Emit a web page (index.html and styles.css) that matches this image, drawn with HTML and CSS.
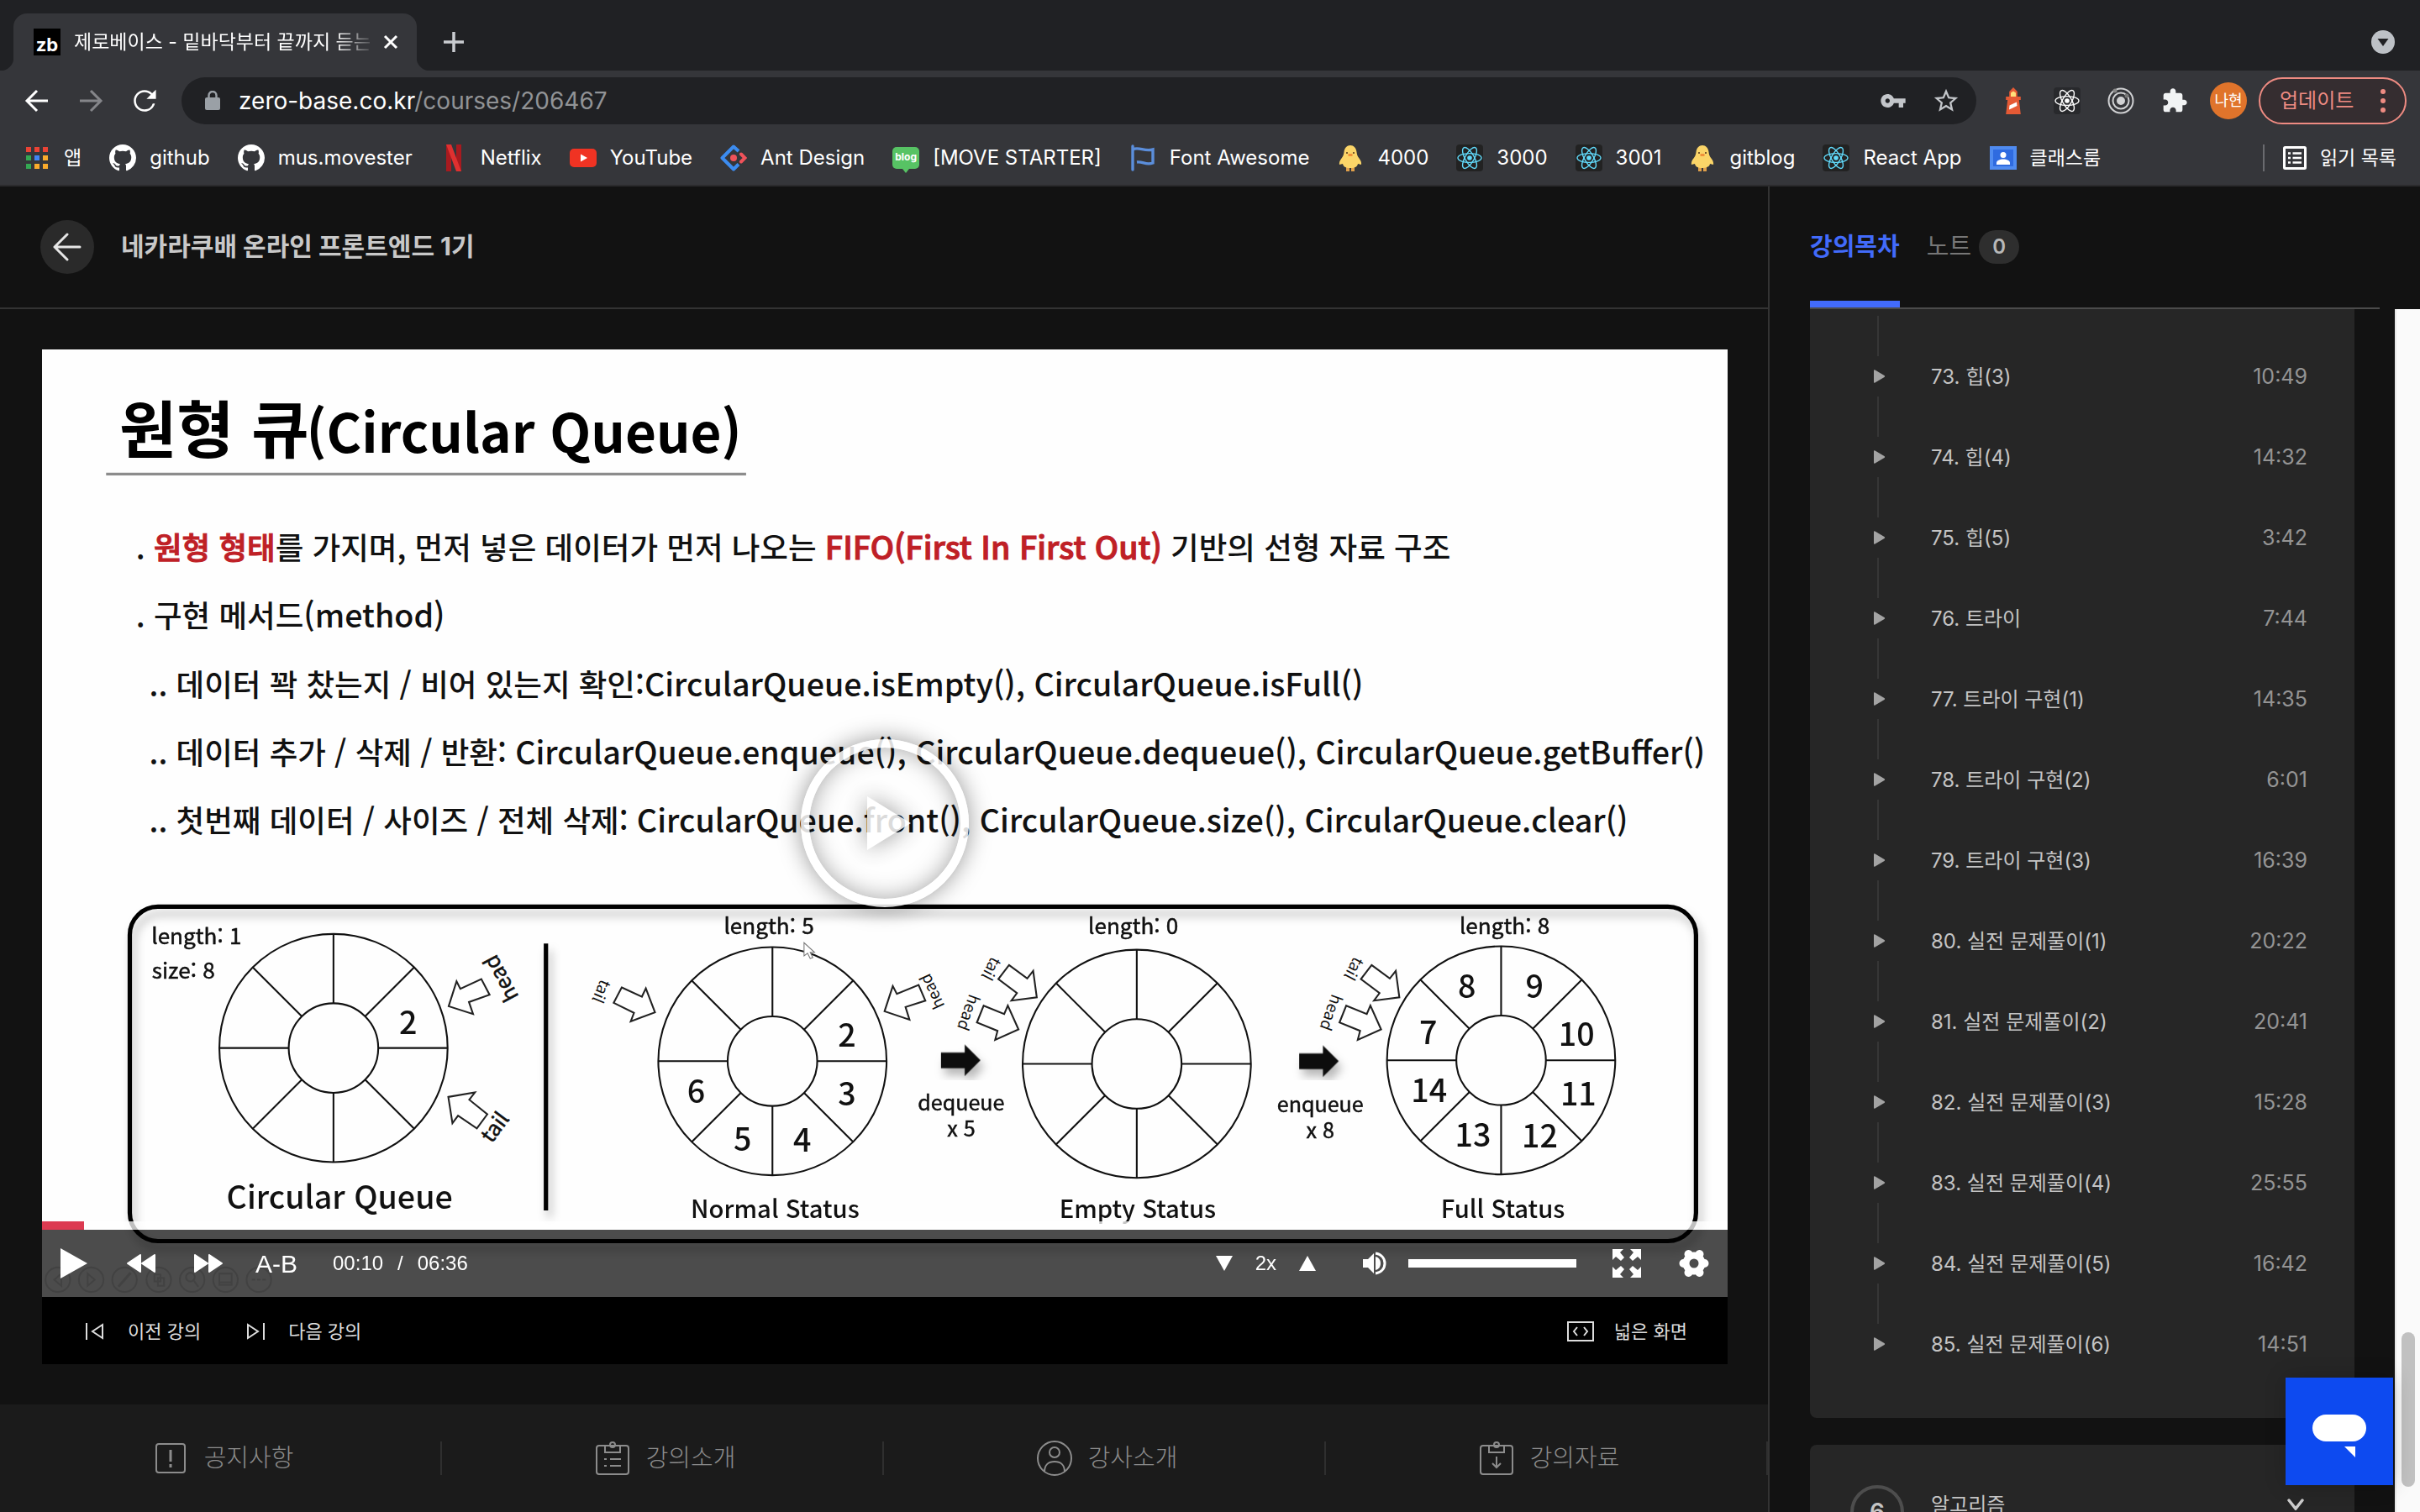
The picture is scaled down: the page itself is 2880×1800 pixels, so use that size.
FILE: index.html
```html
<!DOCTYPE html>
<html lang="ko">
<head>
<meta charset="utf-8">
<title>제로베이스 - 밑바닥부터 끝까지 듣는</title>
<link rel="stylesheet" href="styles.css">
</head>
<body>
<svg class="defs" aria-hidden="true">
  <symbol id="github" viewBox="0 0 16 16"><path fill="#fff" d="M8 0C3.58 0 0 3.58 0 8c0 3.54 2.29 6.53 5.47 7.59.4.07.55-.17.55-.38 0-.19-.01-.82-.01-1.49-2.01.37-2.53-.49-2.69-.94-.09-.23-.48-.94-.82-1.13-.28-.15-.68-.52-.01-.53.63-.01 1.08.58 1.23.82.72 1.21 1.87.87 2.33.66.07-.52.28-.87.51-1.07-1.78-.2-3.64-.89-3.64-3.95 0-.87.31-1.59.82-2.15-.08-.2-.36-1.02.08-2.12 0 0 .67-.21 2.2.82.64-.18 1.32-.27 2-.27s1.36.09 2 .27c1.53-1.04 2.2-.82 2.2-.82.44 1.1.16 1.92.08 2.12.51.56.82 1.27.82 2.15 0 3.07-1.87 3.75-3.65 3.95.29.25.54.73.54 1.48 0 1.07-.01 1.93-.01 2.2 0 .21.15.46.55.38A8.01 8.01 0 0 0 16 8c0-4.42-3.58-8-8-8z"/></symbol>
  <symbol id="atom" viewBox="0 0 32 32"><g fill="none" stroke="currentColor" stroke-width="1.4"><ellipse cx="16" cy="16" rx="14" ry="5.4"/><ellipse cx="16" cy="16" rx="14" ry="5.4" transform="rotate(60 16 16)"/><ellipse cx="16" cy="16" rx="14" ry="5.4" transform="rotate(120 16 16)"/></g><circle cx="16" cy="16" r="2.8" fill="currentColor"/></symbol>
  <symbol id="chick" viewBox="0 0 32 32"><path fill="#e0a04a" d="M11 26h4v6h-4zM17 26h4v6h-4z"/><path fill="#fbd568" d="M16 1c4 0 7 3 7.500 8 .3 3 1 5 3 7.500 2 2.500 3 5 2.500 7.500l-4-1c-.5 3-3 5-9 5s-8.500-2-9-5l-4 1c-.5-2.500.5-5 2.500-7.500s2.700-4.500 3-7.500C9 4 12 1 16 1z"/><path fill="#7a5a2a" d="M11 9h2v2h-2zM19 9h2v2h-2z"/><path fill="#f0913a" d="M13.500 11h5v3h-5z"/></symbol>
  <symbol id="row-play" viewBox="0 0 14 16"><path fill="#a3a3a3" d="M0 1.200Q0-.5 1.500.5l11 6.500q1.300 1 0 2l-11 6.500Q0 16.500 0 14.800z"/></symbol>
</svg>

<div class="shell">
  <header class="browser">
    <div class="tab-strip">
      <div class="tab">
        <span class="favicon">zb</span>
        <span class="tab-title">제로베이스 - 밑바닥부터 끝까지 듣는</span>
        <button class="plain" aria-label="탭 닫기"><svg width="18" height="18" viewBox="0 0 18 18"><path d="M2 2l14 14M16 2L2 16" stroke="#fff" stroke-width="3"/></svg></button>
      </div>
      <button class="plain new-tab" aria-label="새 탭"><svg width="26" height="26" viewBox="0 0 26 26"><path d="M13 1v24M1 13h24" stroke="#c9ccd0" stroke-width="3.500"/></svg></button>
      <button class="plain tab-search" aria-label="탭 검색"><svg width="28" height="28" viewBox="0 0 28 28"><circle cx="14" cy="14" r="14" fill="#bdc1c6"/><path d="M7.500 10h13L14 19z" fill="#202124"/></svg></button>
    </div>

    <div class="toolbar">
      <button class="plain" aria-label="뒤로"><svg width="32" height="32" viewBox="0 0 32 32" fill="none" stroke="#fff" stroke-width="3"><path d="M29 16H5M16 4L4 16l12 12"/></svg></button>
      <button class="plain" aria-label="앞으로"><svg width="32" height="32" viewBox="0 0 32 32" fill="none" stroke="#85868a" stroke-width="3"><path d="M3 16h24M16 4l12 12-12 12"/></svg></button>
      <button class="plain" aria-label="새로고침"><svg width="32" height="32" viewBox="2 2 20 20"><path fill="#fff" d="M17.650 6.350A7.958 7.958 0 0 0 12 4c-4.420 0-7.990 3.580-7.990 8s3.570 8 7.990 8c3.730 0 6.840-2.550 7.730-6h-1.600A6.500 6.500 0 0 1 12 18.400c-3.500 0-6.400-2.900-6.400-6.400s2.900-6.400 6.400-6.400c1.800 0 3.400.7 4.600 1.900L13.500 10.600H20.500V3.700z"/></svg></button>
      <div class="omnibox">
        <svg width="18" height="24" viewBox="0 0 18 24"><path d="M4.500 9V5.500a4.500 4.500 0 0 1 9 0V9" fill="none" stroke="#9aa0a6" stroke-width="2.400"/><rect x="0" y="8" width="18" height="15" rx="2" fill="#9aa0a6"/></svg>
        <span class="url">zero-base.co.kr<span class="url-path">/courses/206467</span></span>
        <button class="plain" aria-label="비밀번호"><svg width="32" height="32" viewBox="0 0 24 24"><path fill="#c3c6ca" d="M12.650 10C11.830 7.670 9.610 6 7 6c-3.310 0-6 2.690-6 6s2.690 6 6 6c2.610 0 4.830-1.670 5.650-4H17v4h4v-4h2v-4H12.650zM7 14c-1.100 0-2-.9-2-2s.9-2 2-2 2 .9 2 2-.9 2-2 2z"/></svg></button>
        <button class="plain" aria-label="북마크"><svg width="34" height="34" viewBox="0 0 24 24"><path fill="#c3c6ca" d="M22 9.240l-7.190-.62L12 2 9.190 8.630 2 9.240l5.460 4.730L5.820 21 12 17.270 18.180 21l-1.630-7.030L22 9.240zM12 15.400l-3.760 2.270 1-4.280-3.320-2.880 4.380-.38L12 6.100l1.710 4.040 4.380.38-3.320 2.880 1 4.280L12 15.400z"/></svg></button>
      </div>
      <div class="extensions">
        <button class="plain" aria-label="Lighthouse"><svg width="32" height="32" viewBox="0 0 32 32"><path fill="#e55a35" d="M16 0l6 5v6h5v4h-2.500L27 32H5l2.500-17H5v-4h5V5z" transform="translate(3.200 0) scale(.8 1)"/><path fill="#ffe07a" d="M13 6.500l3-2 3 2V11h-6z"/><path fill="#fff" d="M11.500 21.500l8.500-4 .5 4.500-9.500 4.500z"/></svg></button>
        <button class="plain atom-ext" aria-label="React Developer Tools"><svg width="32" height="32"><use href="#atom"/></svg></button>
        <button class="plain" aria-label="Target"><svg width="32" height="32" viewBox="0 0 32 32" fill="none" stroke="#d0d1d3" stroke-width="2"><circle cx="16" cy="16" r="14.500"/><circle cx="16" cy="16" r="9.500"/><circle cx="16" cy="16" r="4" fill="#d0d1d3"/><circle cx="9" cy="4" r="2.500" fill="#888" stroke="none"/><circle cx="23" cy="10" r="2.500" fill="#777" stroke="none"/></svg></button>
        <button class="plain" aria-label="확장 프로그램"><svg width="32" height="32" viewBox="0 0 24 24"><path fill="#f1f3f4" d="M20.500 11H19V7c0-1.100-.9-2-2-2h-4V3.500C13 2.120 11.880 1 10.500 1S8 2.120 8 3.500V5H4c-1.100 0-1.990.9-1.990 2v3.800H3.500c1.490 0 2.700 1.210 2.700 2.700s-1.210 2.700-2.700 2.700H2V20c0 1.100.9 2 2 2h3.800v-1.500c0-1.490 1.210-2.700 2.700-2.700 1.490 0 2.700 1.210 2.700 2.700V22H17c1.100 0 2-.9 2-2v-4h1.500c1.380 0 2.500-1.120 2.500-2.500S21.880 11 20.500 11z"/></svg></button>
      </div>
      <button class="plain avatar">나현</button>
      <button class="update">업데이트<svg width="6" height="28" viewBox="0 0 6 28" fill="#ee8b82"><circle cx="3" cy="3" r="3"/><circle cx="3" cy="14" r="3"/><circle cx="3" cy="25" r="3"/></svg></button>
    </div>

    <nav class="bookmarks">
      <a href="#" class="ko"><svg width="32" height="32" viewBox="0 0 32 32"><path fill="#ea4335" d="M3 3h6v6H3zM13 3h6v6h-6zM23 3h6v6h-6z"/><path fill="#34a853" d="M3 13h6v6H3zM3 23h6v6H3z"/><path fill="#4285f4" d="M13 13h6v6h-6z"/><path fill="#fbab2c" d="M23 13h6v6h-6zM13 23h6v6h-6zM23 23h6v6h-6z"/></svg>앱</a>
      <a href="#"><svg width="32" height="32"><use href="#github"/></svg>github</a>
      <a href="#"><svg width="32" height="32"><use href="#github"/></svg>mus.movester</a>
      <a href="#"><svg width="32" height="32" viewBox="0 0 32 32"><path fill="#a81a1f" d="M7 0h6v32H7zM19 0h6v32h-6z"/><path fill="#e03030" d="M7 0h6l12 32h-6z"/></svg>Netflix</a>
      <a href="#"><svg width="32" height="32" viewBox="0 0 32 32"><rect y="5" width="32" height="22" rx="5" fill="#f03323"/><path fill="#fff" d="M13 11.500l8 4.500-8 4.500z"/></svg>YouTube</a>
      <a href="#"><svg width="32" height="32" viewBox="0 0 32 32" fill="none" stroke-width="4"><path stroke="#3c8cf0" stroke-linejoin="round" d="M22 8l-6-5.500L2.500 16 16 29.500l6-6"/><path stroke="#f0525a" stroke-linecap="round" d="M25 11.500l4.500 4.500-4.500 4.500"/><circle cx="16" cy="16" r="4" fill="#f0525a"/></svg>Ant Design</a>
      <a href="#"><span class="blog-icon">blog</span>[MOVE STARTER]</a>
      <a href="#"><svg width="32" height="32" viewBox="0 0 32 32" fill="none" stroke="#5b8edb" stroke-width="3.400"><path d="M4 2v28" stroke-linecap="round"/><path d="M4 6c7-4 14 3 24 0v16c-8 3-12-2-19-1"/></svg>Font Awesome</a>
      <a href="#"><svg width="32" height="32"><use href="#chick"/></svg>4000</a>
      <a href="#"><svg class="react" width="32" height="32"><use href="#atom"/></svg>3000</a>
      <a href="#"><svg class="react" width="32" height="32"><use href="#atom"/></svg>3001</a>
      <a href="#"><svg width="32" height="32"><use href="#chick"/></svg>gitblog</a>
      <a href="#"><svg class="react" width="32" height="32"><use href="#atom"/></svg>React App</a>
      <a href="#" class="ko"><svg width="32" height="32" viewBox="0 0 32 32"><path fill="#4f8bf0" d="M0 2h32v28H0z"/><path fill="#2f6be0" d="M4 6h24v20H4z"/><circle cx="16" cy="12.500" r="3.500" fill="#fff"/><path fill="#fff" d="M8 24v-2c0-3 4-4.500 8-4.500s8 1.500 8 4.500v2z"/></svg>클래스룸</a>
      <a href="#" class="ko reading-list"><svg width="28" height="28" viewBox="0 0 28 28"><rect x="1.500" y="1.500" width="25" height="25" rx="1" fill="none" stroke="#fff" stroke-width="3"/><path stroke="#fff" stroke-width="2.600" d="M6 8.500h3M11.500 8.500H22M6 14h3M11.500 14H22M6 19.500h3M11.500 19.500H22"/></svg>읽기 목록</a>
    </nav>
  </header>

  <div class="page">
    <main class="lesson">
      <div class="lesson-head">
        <button class="plain back" aria-label="뒤로"><svg width="34" height="34" viewBox="0 0 34 34" fill="none" stroke="#e6e6e6" stroke-width="3" stroke-linecap="round" stroke-linejoin="round"><path d="M32 17H2M17 2L2 17l15 15"/></svg></button>
        <h1>네카라쿠배 온라인 프론트엔드 1기</h1>
      </div>

      <section class="player">
        <div class="video">
          <svg class="slide" viewBox="0 0 1920 1080">
            <defs>
              <filter id="soft" x="-10%" y="-10%" width="120%" height="120%"><feDropShadow dx="4" dy="8" stdDeviation="5" flood-opacity=".28"/></filter>
              <g id="wheel" fill="none" stroke="#111" stroke-width="2">
                <circle r="130"/><circle r="51"/>
                <path d="M0-51V-130M0 51V130M-51 0H-130M51 0H130M36-36L92-92M-36 36L-92 92M36 36L92 92M-36-36L-92-92"/>
              </g>
              <g id="both-pointers">
                <path class="pointer" d="M1101.500 701.500L1122.200 716.800 1129 708.200 1133.100 738.200 1104.200 742 1110.500 733.400 1089.300 717.400Z"/>
                <path class="pointer" d="M1072.600 747.700L1096 757.300 1100.100 747.700 1112.300 774.800 1085.700 786.600 1088.400 776.400 1064.900 766.900Z"/>
                <text class="t18" transform="translate(1080 705) rotate(118)" y="5">tail</text>
                <text class="t18" transform="translate(1054 755) rotate(110)" y="5">head</text>
              </g>
              <path id="step" d="M1024 801h27v-9l18 18-18 18v-9h-27z"/>
            </defs>
            <rect width="1920" height="1080" fill="#fefefe"/>
            <text class="title-ko" x="88" y="118">원형 큐</text>
            <text class="title-en" x="301" y="118">(Circular Queue)</text>
            <path d="M73 142H802" stroke="#8c8c8c" stroke-width="3"/>
            <g class="body">
              <text x="107" y="239"><tspan class="ko">. <tspan class="key">원형 형태</tspan>를 가지며, 먼저 넣은 데이터가 먼저 나오는 </tspan><tspan class="key">FIFO(First In First Out)</tspan><tspan class="ko"> 기반의 선형 자료 구조</tspan></text>
              <text x="107" y="317"><tspan class="ko">. 구현 메서드</tspan>(method)</text>
              <text x="122" y="395"><tspan class="ko">.. 데이터 꽉 찼는지 / 비어 있는지 확인:</tspan>CircularQueue.isEmpty(), CircularQueue.isFull()</text>
              <text x="122" y="473"><tspan class="ko">.. 데이터 추가 / 삭제 / 반환: </tspan>CircularQueue.enqueue(), CircularQueue.dequeue(), CircularQueue.getBuffer()</text>
              <text x="122" y="550"><tspan class="ko">.. 첫번째 데이터 / 사이즈 / 전체 삭제: </tspan>CircularQueue.front(), CircularQueue.size(), CircularQueue.clear()</text>
            </g>
            <g fill="none" stroke="#000" stroke-width="5" filter="url(#soft)">
              <rect x="100" y="635" width="1784" height="381" rx="32"/>
              <path d="M574 677V981"/>
            </g>

            <use href="#wheel" x="332" y="796"/>
            <use href="#wheel" x="832" y="811"/>
            <use href="#wheel" x="1247" y="814"/>
            <use href="#wheel" x="1662" y="810"/>
            <path class="pointer" d="M463.200 748.400L472.200 720 476.500 728.600 500.400 717.400 509.800 735.300 486.300 743.600 491 757.300Z"/>
            <path class="pointer" d="M462.800 851.700L493.100 846.600 486.700 854.900 507.200 871.500 495.300 887.500 473.900 873.100 467.500 881.700Z"/>
            <path class="pointer" d="M660.300 727L683.300 737.500 687.800 728 698.200 755.400 670.600 765.600 674.300 756 651.200 744.500Z"/>
            <path class="pointer" d="M959.700 754.100L969.100 725.400 973.700 734.300 998.500 724.100 1006.200 742 983.600 749.300 988.100 763.700Z"/>
            <use href="#both-pointers"/>
            <use href="#both-pointers" x="413"/>
            <g filter="url(#soft)"><use href="#step"/><use href="#step" x="408" y="1"/></g>

            <text class="t24" transform="translate(524 716) rotate(-118)" y="7">head</text>
            <text class="t24" transform="translate(517 887) rotate(-53)" y="7">tail</text>
            <text class="t18" transform="translate(636 731) rotate(113)" y="5">tail</text>
            <text class="t18" transform="translate(1015 731) rotate(-115)" y="5">head</text>

            <g class="t25">
              <text x="176" y="678">length: 1</text><text x="161" y="717">size: 8</text>
              <text x="828" y="666">length: 5</text><text x="1243" y="666">length: 0</text><text x="1666" y="666">length: 8</text>
            </g>
            <g class="t24">
              <text x="1047" y="867">dequeue</text><text x="1047" y="897">x 5</text>
              <text x="1456" y="869">enqueue</text><text x="1456" y="899">x 8</text>
            </g>
            <g class="t28">
              <text x="835" y="990">Normal Status</text><text x="1248" y="990">Empty Status</text><text x="1664" y="990">Full Status</text>
            </g>
            <g class="t36">
              <text x="339" y="979">Circular Queue</text>
              <text x="417" y="780">2</text>
              <text x="917" y="794">2</text><text x="917" y="861">3</text><text x="866" y="914">4</text><text x="798" y="913">5</text><text x="745" y="859">6</text>
              <text x="1579" y="792">7</text><text x="1623" y="739">8</text><text x="1700" y="739">9</text><text x="1748" y="793">10</text>
              <text x="1750" y="861">11</text><text x="1706" y="909">12</text><text x="1630" y="908">13</text><text x="1580" y="858">14</text>
            </g>
            <path d="M868 676v15l4-3 3 6 3-1-3-6h5z" fill="#fff" stroke="#777"/>
            <g fill="none" stroke="#dedede" stroke-width="2">
              <circle cx="18" cy="1060" r="14"/><path d="M22 1053l-8 7 8 7z"/>
              <circle cx="56" cy="1060" r="14"/><path d="M52 1053l8 7-8 7z"/>
              <circle cx="94" cy="1060" r="14"/><path d="M101 1052l-14 16" stroke-width="3"/>
              <circle cx="133" cy="1060" r="14"/><path d="M128 1054h7v8h-7zM132 1058h7v9h-7z"/>
              <circle cx="171" cy="1060" r="14"/><circle cx="169" cy="1057" r="5"/><path d="M173 1061l5 7"/>
              <circle cx="209" cy="1060" r="14"/><path d="M202 1053h14v13h-14zM203 1063h12"/>
              <circle cx="247" cy="1060" r="14"/><path d="M239 1060h4M245 1060h4M251 1060h4"/>
            </g>
          </svg>
          <button class="big-play" aria-label="재생"><svg width="52" height="64" viewBox="0 0 52 64"><path d="M0 0l52 32L0 64z" fill="#fff"/></svg></button>
          <div class="overlay">
            <div class="progress"><div class="played"></div></div>
            <div class="controls">
              <button class="plain w32" aria-label="재생"><svg width="32" height="36" viewBox="0 0 32 36"><path fill="#fff" d="M0 0l32 18L0 36z"/></svg></button>
              <button class="plain w32" aria-label="되감기"><svg width="34" height="22" viewBox="0 0 34 22" fill="#fff" stroke="#fff" stroke-width="2" stroke-linejoin="round"><path d="M16 1v20L1 11zM33 1v20L18 11z"/></svg></button>
              <button class="plain w32" aria-label="빨리감기"><svg width="34" height="22" viewBox="0 0 34 22" fill="#fff" stroke="#fff" stroke-width="2" stroke-linejoin="round"><path d="M1 1v20l15-10zM18 1v20l15-10z"/></svg></button>
              <button class="plain repeat">A-B</button>
              <div class="time"><span>00:10</span><span>/</span><span>06:36</span></div>
              <div class="speed">
                <button class="plain" aria-label="느리게"><svg width="20" height="18" viewBox="0 0 20 18"><path fill="#fff" d="M0 0h20L10 18z"/></svg></button>
                <span>2x</span>
                <button class="plain" aria-label="빠르게"><svg width="20" height="18" viewBox="0 0 20 18"><path fill="#fff" d="M0 18h20L10 0z"/></svg></button>
              </div>
              <button class="plain volume-icon" aria-label="음소거"><svg width="28" height="28" viewBox="0 0 28 28"><path fill="#fff" d="M0 9h6l7-7v24l-7-7H0zM15 6c4 1 6 4 6 8s-2 7-6 8z"/><path d="M15 2c7 1 11 6 11 12s-4 11-11 12" fill="none" stroke="#fff" stroke-width="3"/></svg></button>
              <input class="volume" type="range" min="0" max="100" value="100" aria-label="음량">
              <button class="plain full" aria-label="전체 화면"><svg width="34" height="34" viewBox="0 0 34 34"><path fill="#fff" d="M0 0h13L9 4l5 6-4 4-6-5-4 4zM34 0v13l-4-4-6 5-4-4 5-6-4-4zM0 34V21l4 4 6-5 4 4-5 6 4 4zM34 34H21l4-4-5-6 4-4 6 5 4-4z"/></svg></button>
              <button class="plain" aria-label="설정"><svg width="36" height="36" viewBox="-18 -18 36 36"><g stroke="#fff" stroke-width="10" stroke-linecap="round"><path d="M-12.500 0h25M-6.500-11l13 22M6.500-11l-13 22"/></g><circle r="9.500" fill="none" stroke="#fff" stroke-width="8"/><circle r="5.500" fill="#4c4c4c"/></svg></button>
            </div>
          </div>
        </div>
        <div class="lesson-nav">
          <button class="plain"><svg width="22" height="22" viewBox="0 0 22 22" fill="none" stroke="#ddd" stroke-width="2"><path d="M1 1v20M20 3v16L8 11z"/></svg>이전 강의</button>
          <button class="plain"><svg width="22" height="22" viewBox="0 0 22 22" fill="none" stroke="#ddd" stroke-width="2"><path d="M21 1v20M2 3v16l12-8z"/></svg>다음 강의</button>
          <button class="plain wide"><svg width="32" height="24" viewBox="0 0 32 24" fill="none" stroke="#ddd" stroke-width="2"><path d="M1 1h30v22H1zM12 7l-4 5 4 5M20 7l4 5-4 5"/></svg>넓은 화면</button>
        </div>
      </section>

      <nav class="info-tabs">
        <a href="#"><svg width="48" height="48" viewBox="0 0 48 48"><rect x="7" y="7" width="34" height="34" rx="3"/><path d="M24 14v14M24 31v4" stroke-width="3"/></svg>공지사항</a>
        <a href="#"><svg width="48" height="48" viewBox="0 0 48 48"><rect x="5" y="9" width="38" height="34" rx="3"/><path d="M15 9v8h18V9"/><circle cx="24" cy="8" r="3"/><path d="M14 25h3M21 25h13M14 33h3M21 33h13"/></svg>강의소개</a>
        <a href="#"><svg width="48" height="48" viewBox="0 0 48 48"><circle cx="24" cy="24" r="20"/><circle cx="24" cy="17" r="6"/><path d="M12 40c0-8 5-12 12-12s12 4 12 12"/></svg>강사소개</a>
        <a href="#"><svg width="48" height="48" viewBox="0 0 48 48"><rect x="5" y="9" width="38" height="34" rx="3"/><path d="M15 9v8h18V9"/><circle cx="24" cy="8" r="3"/><path d="M24 22v13M19 30l5 5 5-5"/></svg>강의자료</a>
      </nav>
    </main>

    <aside class="sidebar">
      <div class="side-tabs">
        <a href="#" class="current">강의목차</a>
        <a href="#">노트<span class="badge">0</span></a>
      </div>
      <div class="scroll">
        <div class="cards">
          <ol class="card lessons">
            <li><span class="marker"><svg width="14" height="16"><use href="#row-play"/></svg></span><a href="#">73. 힙(3)</a><time>10:49</time></li>
            <li><span class="marker"><svg width="14" height="16"><use href="#row-play"/></svg></span><a href="#">74. 힙(4)</a><time>14:32</time></li>
            <li><span class="marker"><svg width="14" height="16"><use href="#row-play"/></svg></span><a href="#">75. 힙(5)</a><time>3:42</time></li>
            <li><span class="marker"><svg width="14" height="16"><use href="#row-play"/></svg></span><a href="#">76. 트라이</a><time>7:44</time></li>
            <li><span class="marker"><svg width="14" height="16"><use href="#row-play"/></svg></span><a href="#">77. 트라이 구현(1)</a><time>14:35</time></li>
            <li><span class="marker"><svg width="14" height="16"><use href="#row-play"/></svg></span><a href="#">78. 트라이 구현(2)</a><time>6:01</time></li>
            <li><span class="marker"><svg width="14" height="16"><use href="#row-play"/></svg></span><a href="#">79. 트라이 구현(3)</a><time>16:39</time></li>
            <li><span class="marker"><svg width="14" height="16"><use href="#row-play"/></svg></span><a href="#">80. 실전 문제풀이(1)</a><time>20:22</time></li>
            <li><span class="marker"><svg width="14" height="16"><use href="#row-play"/></svg></span><a href="#">81. 실전 문제풀이(2)</a><time>20:41</time></li>
            <li><span class="marker"><svg width="14" height="16"><use href="#row-play"/></svg></span><a href="#">82. 실전 문제풀이(3)</a><time>15:28</time></li>
            <li><span class="marker"><svg width="14" height="16"><use href="#row-play"/></svg></span><a href="#">83. 실전 문제풀이(4)</a><time>25:55</time></li>
            <li><span class="marker"><svg width="14" height="16"><use href="#row-play"/></svg></span><a href="#">84. 실전 문제풀이(5)</a><time>16:42</time></li>
            <li><span class="marker"><svg width="14" height="16"><use href="#row-play"/></svg></span><a href="#">85. 실전 문제풀이(6)</a><time>14:51</time></li>
          </ol>
          <button class="card chapter">
            <span class="chapter-no">6</span>
            <span class="chapter-name">알고리즘</span>
            <svg width="20" height="14" viewBox="0 0 20 14" fill="none" stroke="#ccc" stroke-width="3.500" stroke-linecap="round"><path d="M2 2l8 10 8-10"/></svg>
          </button>
        </div>
        <div class="scrollbar"><div class="thumb"></div></div>
      </div>
      <button class="chat" aria-label="채팅 문의"><svg width="64" height="52" viewBox="0 0 64 52" fill="#fff"><rect width="64" height="32" rx="16"/><path d="M38 38h13v13z"/></svg></button>
    </aside>
  </div>
</div>
</body>
</html>
```
FILE: styles.css
```css
* { box-sizing: border-box; }

body {
  margin: 0;
  background: #121212;
  font-family: "Inter", "Noto Sans CJK KR", sans-serif;
  font-size: 24px;
  line-height: 1.25;
}

a { color: inherit; text-decoration: none; }
svg { display: block; flex: none; }
.defs { position: absolute; width: 0; height: 0; }

.plain {
  display: flex;
  align-items: center;
  justify-content: center;
  margin: 0;
  padding: 0;
  border: 0;
  background: none;
  color: inherit;
  font: inherit;
}

.shell {
  display: flex;
  flex-direction: column;
  height: 100vh;
  overflow: hidden;
}

/* Browser window */
.browser {
  background: #35363a;
  color: #fff;
  border-bottom: 2px solid #2b2b2d;
}

.tab-strip {
  display: flex;
  align-items: center;
  height: 84px;
  padding: 16px 30px 0 16px;
  background: #202124;
}

.tab {
  position: relative;
  display: flex;
  align-items: center;
  width: 480px;
  height: 68px;
  padding: 0 22px 0 24px;
  gap: 16px;
  border-radius: 16px 16px 0 0;
  background: #35363a;
}

.tab::before,
.tab::after {
  content: "";
  position: absolute;
  bottom: 0;
  width: 16px;
  height: 16px;
}
.tab::before { right: 100%; background: radial-gradient(circle at 0 0, #202124 16px, #35363a 17px); }
.tab::after { left: 100%; background: radial-gradient(circle at 100% 0, #202124 16px, #35363a 17px); }

.favicon {
  display: flex;
  align-items: flex-end;
  justify-content: center;
  width: 32px;
  height: 32px;
  background: #000;
  font-size: 22px;
  line-height: 26px;
  font-weight: 700;
}

.tab-title {
  flex: 1;
  min-width: 0;
  white-space: nowrap;
  font-size: 23px;
  mask-image: linear-gradient(90deg, #000 310px, transparent 360px);
}

.new-tab { margin-left: 31px; }
.tab-search { margin-left: auto; }

.toolbar {
  display: flex;
  align-items: center;
  height: 72px;
  padding: 0 16px 0 28px;
  gap: 32px;
}

.omnibox {
  display: flex;
  flex: 1;
  align-items: center;
  height: 56px;
  margin-left: -4px;
  padding: 0 19px 0 28px;
  gap: 30px;
  border-radius: 28px;
  background: #202124;
}
.url { flex: 1; margin-left: -8px; font-size: 28px; }
.url-path { color: #919396; }

.extensions { display: flex; gap: 32px; margin: 0 -6px 0 -4px; }
.atom-ext { background: #28292c; border-radius: 4px; }

.avatar {
  width: 44px;
  height: 44px;
  border-radius: 50%;
  background: #e0742b;
  font-size: 18px;
}

.update {
  display: flex;
  align-items: center;
  justify-content: space-between;
  width: 176px;
  height: 56px;
  margin-left: -18px;
  padding: 0 23px;
  border: 2px solid #ee8b82;
  border-radius: 28px;
  background: #352d30;
  color: #ee8b82;
  font: inherit;
}

.bookmarks {
  display: flex;
  align-items: center;
  height: 64px;
  padding: 0 28px;
  gap: 33px;
}
.bookmarks a { display: flex; align-items: center; gap: 16px; white-space: nowrap; }
.bookmarks .ko { font-size: 23px; }
.react { border-radius: 4px; background: #222; color: #61dafb; }

.blog-icon {
  position: relative;
  width: 32px;
  height: 26px;
  border-radius: 5px;
  background: #57c364;
  font-size: 12px;
  line-height: 24px;
  font-weight: 700;
  text-align: center;
}
.blog-icon::after {
  content: "";
  position: absolute;
  top: 100%;
  left: 12px;
  border: 4px solid transparent;
  border-top: 5px solid #57c364;
}

.bookmarks .reading-list {
  height: 32px;
  margin-left: auto;
  padding-left: 22px;
  border-left: 2px solid #6a6b6f;
}

/* Course page */
.page { display: flex; flex: 1; min-height: 0; }

.lesson {
  display: flex;
  flex: 1;
  flex-direction: column;
  min-width: 0;
  border-right: 2px solid #333;
}

.lesson-head {
  display: flex;
  align-items: center;
  height: 146px;
  padding: 0 48px;
  gap: 32px;
  border-bottom: 2px solid #333;
}
.lesson-head h1 { margin: 0; color: #c8c8c8; font-size: 30px; font-weight: 700; }
.back { width: 64px; height: 64px; border-radius: 50%; background: #2a2a2a; }

.player { padding: 48px 48px 48px 50px; }

.video { position: relative; }
.slide {
  width: 100%;
  height: auto;
  font-family: "Noto Sans CJK KR", sans-serif;
  font-weight: 500;
  fill: #111;
}
.title-ko { font-size: 71px; font-weight: 700; fill: #000; }
.title-en { font-size: 61px; font-weight: 700; fill: #000; }
.body { font-size: 36px; }
.body .ko { font-size: 35px; }
.key { fill: #bf2026; stroke: #bf2026; stroke-width: 1; }
.pointer { fill: #fff; stroke: #222; stroke-width: 2; }
.t18, .t24, .t25, .t28, .t36 { text-anchor: middle; }
.t24, .t25 { font-weight: 400; stroke: #111; stroke-width: .5; }
.t18 { font-size: 18px; font-weight: 400; }
.t24 { font-size: 24px; }
.t25 { font-size: 25px; }
.t28 { font-size: 28px; }
.t36 { font-size: 36px; }

.big-play {
  position: absolute;
  inset: 0;
  display: flex;
  align-items: center;
  justify-content: center;
  width: 200px;
  height: 200px;
  margin: auto;
  padding: 0 0 0 10px;
  border: 10px solid rgba(255, 255, 255, .85);
  border-radius: 50%;
  background: none;
  box-shadow: 0 0 28px rgba(0, 0, 0, .4), inset 0 0 28px rgba(0, 0, 0, .35);
}
.big-play svg { overflow: visible; opacity: .85; filter: drop-shadow(0 0 14px rgba(0, 0, 0, .45)); }

.overlay { position: absolute; right: 0; bottom: 0; left: 0; }
.progress { height: 10px; background: rgba(255, 255, 255, .75); }
.played { width: 50px; height: 10px; background: #dc3a51; }

.controls {
  display: flex;
  align-items: center;
  height: 80px;
  padding: 0 22px;
  background: rgba(0, 0, 0, .7);
  color: #fff;
  font-family: "Liberation Sans", sans-serif;
}
.w32 { width: 32px; margin-right: 48px; }
.repeat { margin-right: 42px; margin-left: -8px; font-size: 30px; }
.time { display: flex; gap: 17px; }
.speed { display: flex; align-items: center; gap: 27px; margin-left: auto; margin-right: 56px; }
.volume-icon { margin-right: 26px; }
.volume {
  width: 200px;
  height: 10px;
  margin: 0 43px 0 0;
  appearance: none;
  background: #fff;
}
.volume::-webkit-slider-thumb { width: 10px; height: 10px; appearance: none; background: #fff; }
.full { margin-right: 45px; }

.lesson-nav {
  display: flex;
  align-items: center;
  height: 80px;
  padding: 2px 48px 0 52px;
  gap: 54px;
  background: #000;
  color: #ddd;
  font-size: 22px;
}
.lesson-nav button { gap: 28px; }
.lesson-nav .wide { margin-left: auto; gap: 24px; }

.info-tabs { display: flex; flex: 1; align-items: center; background: #1b1b1b; color: #8c8c8c; font-size: 29px; font-weight: 300; }
.info-tabs a {
  display: flex;
  flex: 1;
  align-items: center;
  justify-content: center;
  gap: 16px;
  height: 40px;
  padding-left: 4px;
  border-right: 2px solid #2f2f2f;
}
.info-tabs svg { fill: none; stroke: #8c8c8c; stroke-width: 2; }

/* Curriculum */
.sidebar { position: relative; display: flex; flex: none; flex-direction: column; width: 774px; }

.side-tabs {
  display: flex;
  flex: none;
  height: 146px;
  margin: 0 48px;
  gap: 32px;
  border-bottom: 2px solid #4b4b4b;
  color: #777;
  font-size: 29px;
}
.side-tabs a { display: flex; align-items: center; gap: 9px; }
.side-tabs .current { border-top: 8px solid transparent; border-bottom: 8px solid #426bfb; color: #426bfb; font-weight: 700; }

.badge {
  width: 48px;
  height: 40px;
  border-radius: 20px;
  background: #2e2e2e;
  color: #b8b8b8;
  font-size: 24px;
  line-height: 40px;
  font-weight: 600;
  text-align: center;
}

.scroll { display: flex; flex: 1; min-height: 0; overflow: hidden; }
.cards { flex: 1; padding: 0 48px; }
.card { background: #262626; color: #c4c4c4; }

.lessons {
  margin: 0 0 32px;
  padding: 32px 56px 40px 48px;
  border-radius: 0 0 8px 8px;
  list-style: none;
}
.lessons li { display: flex; align-items: center; height: 96px; gap: 32px; }
.lessons a, .lessons time { padding-top: 2px; }
.lessons a { flex: 1; }
.lessons time { color: #949494; font-size: 25px; }

.marker {
  position: relative;
  display: flex;
  align-items: center;
  justify-content: center;
  width: 64px;
  height: 96px;
}
.marker::before {
  content: "";
  position: absolute;
  top: -24px;
  left: 32px;
  width: 2px;
  height: 48px;
  background: #363636;
}
.marker svg { margin-left: 5px; }

.chapter {
  display: flex;
  align-items: flex-start;
  width: 100%;
  padding: 48px 60px 48px 48px;
  gap: 32px;
  border: 0;
  border-radius: 8px 8px 0 0;
  font: inherit;
  text-align: left;
}
.chapter-no {
  width: 64px;
  height: 64px;
  border: 4px solid #4d4d4d;
  border-radius: 50%;
  font-size: 28px;
  line-height: 56px;
  font-weight: 600;
  text-align: center;
}
.chapter-name { flex: 1; padding-top: 6px; line-height: 36px; }
.chapter svg { margin-top: 16px; }

.scrollbar {
  display: flex;
  flex-direction: column;
  align-items: center;
  justify-content: flex-end;
  width: 30px;
  padding-bottom: 30px;
  border-left: 2px solid #e8e8e8;
  background: #fafafa;
}
.thumb { width: 16px; height: 184px; border-radius: 8px; background: #c1c1c1; }

.chat {
  position: absolute;
  right: 32px;
  bottom: 32px;
  display: flex;
  align-items: center;
  justify-content: center;
  width: 128px;
  height: 128px;
  padding: 12px 0 0;
  border: 0;
  background: #0d4af0;
  box-shadow: 0 0 24px rgba(0, 0, 0, .2);
}
```
